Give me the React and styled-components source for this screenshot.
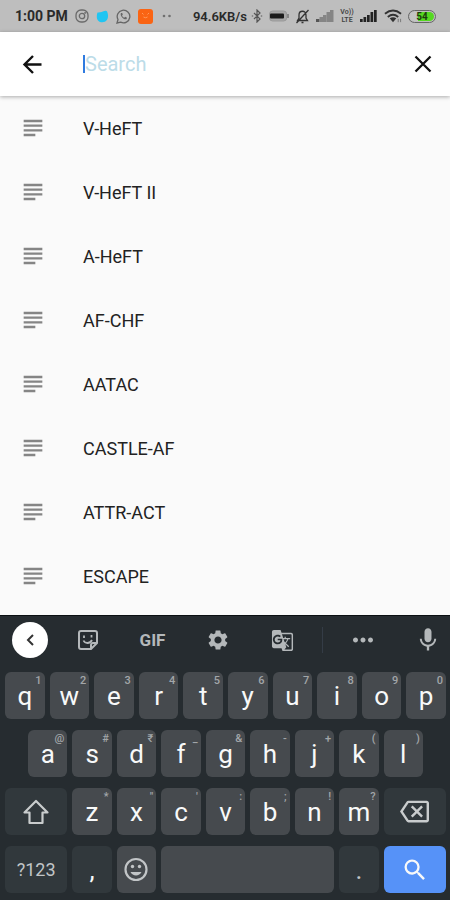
import React from "react";
import styled, { createGlobalStyle } from "styled-components";
import {
  MdSubject,
  MdSettings,
  MdGTranslate,
  MdMoreHoriz,
  MdMic,
  MdSearch,
  MdOutlineBackspace,
} from "react-icons/md";

const GlobalStyle = createGlobalStyle`
  * { box-sizing: border-box; }
  body {
    margin: 0;
    background: #fafafa;
    font-family: Roboto, "Liberation Sans", sans-serif;
  }
  button, input { font-family: inherit; }
  button { border: 0; padding: 0; background: none; cursor: pointer; }
  svg { display: block; flex: none; }
`;

const Screen = styled.div`
  display: flex;
  flex-direction: column;
  height: 100vh;
`;

const StatusBar = styled.header`
  display: flex;
  align-items: center;
  justify-content: space-between;
  flex: none;
  height: 32px;
  padding: 0 14px 0 15px;
  background: #bebebe;
  color: #2a2a2a;
  font-size: 14px;
  font-weight: 700;
  white-space: nowrap;
`;

const StatusGroup = styled.div`
  display: flex;
  align-items: center;
  gap: ${(p) => p.$gap}px;
`;

const Speed = styled.span`
  font-size: 13px;
  font-weight: 600;
`;

const Volte = styled.span`
  display: flex;
  flex-direction: column;
  align-items: center;
  width: 14px;
  font-size: 7px;
  line-height: 8px;
  font-weight: 600;
  color: #444;
`;

const Battery = styled.span`
  display: flex;
  align-items: center;
  justify-content: center;
  width: 28px;
  height: 13px;
  border: 1px solid #666;
  border-radius: 7px;
  background: linear-gradient(90deg, #c4c4c4 32%, #55d820 32%) content-box;
  padding: 1px;
  color: #1d3a10;
  font-size: 10px;
  line-height: 9px;
  font-weight: 700;
`;

const SearchBar = styled.form`
  display: flex;
  align-items: center;
  flex: none;
  z-index: 1;
  height: 64px;
  padding: 0 13px 0 19px;
  background: #fff;
  box-shadow: 0 1px 4px rgba(0, 0, 0, 0.32);
`;

const IconButton = styled.button`
  display: flex;
  color: #111;
`;

const Caret = styled.span`
  width: 2px;
  height: 18px;
  margin-left: 36px;
  background: #2f7be0;
`;

const SearchInput = styled.input`
  flex: 1;
  min-width: 0;
  border: 0;
  padding: 0;
  outline: 0;
  background: transparent;
  color: #111;
  font-size: 20px;
  line-height: 24px;
  &::placeholder { color: #bcdce8; opacity: 1; }
`;

const Results = styled.ul`
  flex: 1;
  min-height: 0;
  overflow: hidden;
  margin: 0;
  padding: 0;
  list-style: none;
  background: #fafafa;
`;

const Result = styled.li`
  display: flex;
  align-items: center;
  gap: 36px;
  height: 64px;
  padding: 0 19px;
  color: #222;
  font-size: 18px;
  svg { color: #858585; }
`;

const Keyboard = styled.section`
  flex: none;
  padding: 0 4px 6px 5px;
  border-top: 1px solid #0b0f12;
  background: #262c30;
`;

const Toolbar = styled.div`
  display: grid;
  grid-template-columns: 50fr repeat(4, 65fr) 15fr 65fr 51fr;
  align-items: center;
  justify-items: center;
  height: 48px;
  margin-bottom: 8px;
`;

const Tool = styled.button`
  display: flex;
  align-items: center;
  justify-content: center;
  width: 36px;
  height: 36px;
  color: #b4b8ba;
  font-size: 17px;
  font-weight: 700;
  &:last-child { justify-self: end; }
`;

const RoundTool = styled(Tool)`
  border-radius: 50%;
  background: #fff;
  color: #333;
`;

const Divider = styled.span`
  width: 1px;
  height: 26px;
  background: #343c46;
`;

const Rows = styled.div`
  display: grid;
  gap: 11px;
  padding-bottom: 1px;
`;

const KeyRow = styled.div`
  display: flex;
  gap: 5px;
  padding: 0 ${(p) => p.$inset || 0}px;
`;

const keyColors = { letter: "#464a4e", dark: "#31383c", accent: "#5692f8" };

const Key = styled.button`
  position: relative;
  display: flex;
  align-items: center;
  justify-content: center;
  flex: ${(p) => p.$grow || 40} 1 0;
  min-width: 0;
  height: 47px;
  border-radius: 6px;
  background: ${(p) => keyColors[p.$tone || "letter"]};
  color: ${(p) => p.$color || "#f8f9f9"};
  font-size: ${(p) => p.$size || 26}px;
  font-weight: 400;
  line-height: 32px;
`;

const Hint = styled.span`
  position: absolute;
  top: 3px;
  right: 3px;
  color: #a2a6a9;
  font-size: 11px;
  font-weight: 500;
  line-height: 12px;
`;

const Signal = ({ label, dim }) => (
  <svg width="18" height="14" viewBox="0 0 18 14" role="img" aria-label={label}>
    {[3, 5, 7, 10, 12].map((h, i) => (
      <rect key={h} x={i * 3.5} y={13 - h} width={dim ? 3.5 : 2.7} height={h} fill={dim ? (i < 1 ? "#555" : "#858585") : "#222"} />
    ))}
  </svg>
);

const BackArrow = () => (
  <svg width="28" height="28" viewBox="0 0 28 28" fill="none" stroke="currentColor" strokeWidth="2.4">
    <path d="M22.5 14.500H6M14 6 5.500 14.500 14 23" />
  </svg>
);

const Cross = () => (
  <svg width="28" height="28" viewBox="0 0 28 28" fill="none" stroke="currentColor" strokeWidth="2.3">
    <path d="m6.5 6.5 15 15M21.5 6.5l-15 15" />
  </svg>
);

const Sticker = () => (
  <svg width="22" height="22" viewBox="0 0 22 22" fill="none" stroke="currentColor" strokeWidth="2">
    <path d="M4 2h14a2 2 0 0 1 2 2v10l-6 6H4a2 2 0 0 1-2-2V4a2 2 0 0 1 2-2Z" />
    <path d="M14 20v-4a2 2 0 0 1 2-2h4" />
    <path d="M6.5 11.5c1.5 3.4 6.5 3.4 8.5-.5M7 6.5v2.5M14.5 6v2.5" strokeWidth="1.8" />
  </svg>
);

const Shift = () => (
  <svg width="28" height="28" viewBox="0 0 28 28" fill="none" stroke="#c9cccd" strokeWidth="2.2" strokeLinejoin="round">
    <path d="M14 3 2.5 14.5H7.5V25h13V14.500h5Z" />
  </svg>
);

const Smile = () => (
  <svg width="26" height="26" viewBox="0 0 26 26" fill="none" stroke="#c2c5c7" strokeWidth="2.2">
    <circle cx="12" cy="12.500" r="10.500" />
    <path d="M6.500 15c2 4.500 9 4.500 11 0Z" fill="#c2c5c7" stroke="none" />
    <circle cx="8.500" cy="9.500" r="1.700" fill="#c2c5c7" stroke="none" />
    <circle cx="15.500" cy="9.500" r="1.700" fill="#c2c5c7" stroke="none" />
  </svg>
);

const StatusLeft = () => (
  <StatusGroup $gap={7}>
    <span>1:00 PM</span>
    <svg width="14" height="14" viewBox="0 0 14 14" fill="none" stroke="#6b6b6b" strokeWidth="1.3">
      <rect x="1" y="1" width="12" height="12" rx="5" />
      <circle cx="7" cy="7" r="2.700" />
      <circle cx="10.300" cy="3.800" r=".4" />
    </svg>
    <svg width="13" height="13" viewBox="0 0 13 13">
      <path d="M1.500 2.500C4 3 6 1.500 9.500.8c1.500-.2 1.800 1 2.300 3C13 9 10 12.300 6.300 12.300 3 12.300.8 10 .8 7c0-2 .2-3 .7-4.500Z" fill="#20c5f2" />
    </svg>
    <svg width="15" height="15" viewBox="0 0 15 15">
      <path d="M1 14l1-3.500a6.300 6.300 0 1 1 2.700 2.600Z" fill="none" stroke="#666" strokeWidth="1.300" />
      <path d="M5 4c-1.500 2.500 2.500 7 5.500 6.300l.5-1.600-1.800-1-1 1C7 8.300 6.200 7.300 6 6.500l.8-.8L6.200 4Z" fill="#666" />
    </svg>
    <svg width="15" height="15" viewBox="0 0 15 15">
      <rect width="15" height="15" rx="3" fill="#fa6413" />
      <path d="M4 4 5.500 5.500M9.500 5.500 11 4M5.500 8q2 1.500 4 0" stroke="#ff9a5c" fill="none" />
    </svg>
    <svg width="18" height="4" viewBox="0 0 18 4" fill="#707070">
      <circle cx="4" cy="2" r="1.300" />
      <circle cx="9.500" cy="2" r="1.300" />
    </svg>
  </StatusGroup>
);

const StatusRight = () => (
  <StatusGroup $gap={6}>
    <StatusGroup $gap={4}>
      <Speed>94.6KB/s</Speed>
      <svg width="12" height="14" viewBox="0 0 12 14" fill="none" stroke="#555" strokeWidth="1.200">
        <path d="m3 4 6 6-3 3V1l3 3-6 6M.8 7h1.400M9.800 7h1.400" />
      </svg>
    </StatusGroup>
    <svg width="20" height="12" viewBox="0 0 20 12">
      <rect x=".6" y="1" width="17" height="10" rx="3" fill="#a7a7a7" stroke="#999" />
      <rect x="1" y="3.500" width="14" height="5" rx="1" fill="#1b1b1b" />
      <rect x="18" y="4" width="2" height="4" fill="#888" />
    </svg>
    <svg width="15" height="15" viewBox="0 0 15 15" fill="none" stroke="#333" strokeWidth="1.300">
      <path d="M2.500 11.500h10L11 9V6c0-5-7-5-7 0v3Zm4 2h2M13.500 1 1.500 14" />
    </svg>
    <Signal dim label="Signal, first line" />
    <Volte><span>Vo))</span><span>LTE</span></Volte>
    <Signal label="Signal, second line" />
    <svg width="18" height="14" viewBox="0 0 19 14" fill="none" stroke="#333" strokeWidth="2">
      <path d="M1 4.500q8.500-6.500 17 0M4 8q5.500-4.500 11 0" />
      <path d="m6 9.500 3.500 4 3.500-4q-3.500-2.500-7 0Z" fill="#333" stroke="none" />
      <path d="M15 10v3.500M17.500 10v3.500" stroke="#777" strokeWidth="1" />
    </svg>
    <Battery>54</Battery>
  </StatusGroup>
);

const trials = ["V-HeFT", "V-HeFT II", "A-HeFT", "AF-CHF", "AATAC", "CASTLE-AF", "ATTR-ACT", "ESCAPE"];

const topKeys = [["q", "1"], ["w", "2"], ["e", "3"], ["r", "4"], ["t", "5"], ["y", "6"], ["u", "7"], ["i", "8"], ["o", "9"], ["p", "0"]];
const homeKeys = [["a", "@"], ["s", "#"], ["d", "₹"], ["f", "_"], ["g", "&"], ["h", "-"], ["j", "+"], ["k", "("], ["l", ")"]];
const lowKeys = [["z", "*"], ["x", "\""], ["c", "'"], ["v", ":"], ["b", ";"], ["n", "!"], ["m", "?"]];

const LetterKeys = ({ keys }) =>
  keys.map(([letter, hint]) => (
    <Key key={letter} type="button">
      {letter}
      <Hint>{hint}</Hint>
    </Key>
  ));

export default function App() {
  return (
    <Screen>
      <GlobalStyle />
      <StatusBar>
        <StatusLeft />
        <StatusRight />
      </StatusBar>
      <SearchBar role="search" onSubmit={(e) => e.preventDefault()}>
        <IconButton type="button" aria-label="Back"><BackArrow /></IconButton>
        <Caret />
        <SearchInput type="text" placeholder="Search" aria-label="Search" />
        <IconButton type="reset" aria-label="Clear"><Cross /></IconButton>
      </SearchBar>
      <Results>
        {trials.map((name) => (
          <Result key={name}>
            <MdSubject size={28} />
            {name}
          </Result>
        ))}
      </Results>
      <Keyboard aria-label="Keyboard">
        <Toolbar>
          <RoundTool type="button" aria-label="Collapse">
            <svg width="16" height="16" viewBox="0 0 16 16" fill="none" stroke="currentColor" strokeWidth="2">
              <path d="M11 3 6 8l5 5" />
            </svg>
          </RoundTool>
          <Tool type="button" aria-label="Stickers"><Sticker /></Tool>
          <Tool type="button">GIF</Tool>
          <Tool type="button" aria-label="Settings"><MdSettings size={24} /></Tool>
          <Tool type="button" aria-label="Translate"><MdGTranslate size={23} /></Tool>
          <Divider />
          <Tool type="button" aria-label="More"><MdMoreHoriz size={30} /></Tool>
          <Tool type="button" aria-label="Voice input"><MdMic size={28} /></Tool>
        </Toolbar>
        <Rows>
          <KeyRow><LetterKeys keys={topKeys} /></KeyRow>
          <KeyRow $inset={23}><LetterKeys keys={homeKeys} /></KeyRow>
          <KeyRow>
            <Key type="button" aria-label="Shift" $tone="dark" $grow={63}><Shift /></Key>
            <LetterKeys keys={lowKeys} />
            <Key type="button" aria-label="Backspace" $tone="dark" $grow={63} $color="#c9cccd"><MdOutlineBackspace size={29} /></Key>
          </KeyRow>
          <KeyRow>
            <Key type="button" $tone="dark" $grow={63} $size={18} $color="#c2c5c7">?123</Key>
            <Key type="button" $tone="dark">,</Key>
            <Key type="button" aria-label="Emoji"><Smile /></Key>
            <Key type="button" aria-label="Space" $grow={175} />
            <Key type="button" $tone="dark" $color="#c2c5c7">.</Key>
            <Key type="submit" aria-label="Search" $tone="accent" $grow={63}><MdSearch size={28} /></Key>
          </KeyRow>
        </Rows>
      </Keyboard>
    </Screen>
  );
}
